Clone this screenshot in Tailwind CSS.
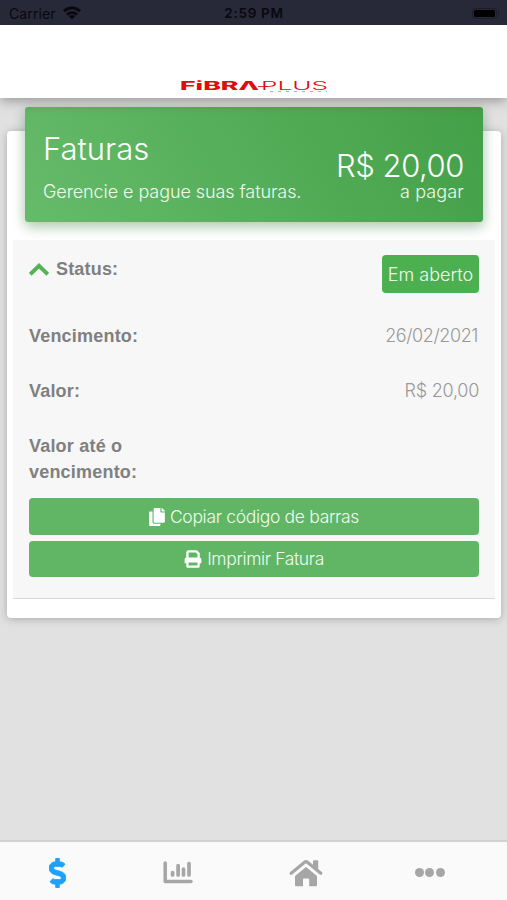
<!DOCTYPE html>
<html lang="pt-BR">
<head>
<meta charset="utf-8">
<title>Faturas</title>
<script src="https://cdn.jsdelivr.net/npm/@tailwindcss/browser@4"></script>
</head>
<body class="w-[507px] h-[900px] overflow-hidden bg-[#e1e1e1] flex flex-col font-['Inter','Liberation_Sans',sans-serif] font-light text-[17px]">
  <div class="h-[25px] shrink-0 bg-[#272838] text-[#08080e] grid grid-cols-3 items-center pl-[9px] pr-[8px] pt-[2px] text-[13px] relative z-20">
    <div class="flex items-center gap-[7px]">
      <span class="font-normal text-[14px] tracking-[0.1px]">Carrier</span>
      <svg class="w-[18px] h-[14px] -mt-[2px]" viewBox="0 0 18 14" fill="none" stroke="currentColor" stroke-width="2.8"><path d="M1 5.200a11.500 11.500 0 0 1 16 0M4 8.700a7.200 7.200 0 0 1 10 0"/><path d="M9 13.500 6 10.500a4.300 4.300 0 0 1 6 0z" fill="currentColor" stroke="none"/></svg>
    </div>
    <span class="text-center font-semibold text-[13.5px] tracking-[0.7px] whitespace-nowrap">2:59 PM</span>
    <div class="flex justify-end items-center gap-[1px] -mt-[1px]">
      <div class="w-[25px] h-[11px] rounded-[3px] border border-[#1d1d2a] p-px"><div class="h-full bg-black rounded-[1.5px]"></div></div>
      <div class="w-[1px] h-[4px] bg-[#1d1d2a]"></div>
    </div>
  </div>
  <header class="h-[73px] shrink-0 bg-white shadow-[0_2px_12px_rgba(0,0,0,0.38)] relative z-10 flex justify-center items-end pb-[4px]">
    <svg class="w-[150px] h-[16px]" viewBox="0 0 150 16">
      <g fill="#e20a10" font-family="Inter, sans-serif">
        <text x="1" y="11.500" font-size="11.500" font-weight="800" textLength="79" lengthAdjust="spacingAndGlyphs">FiBRΛ</text>
        <text x="82" y="11.500" font-size="11" font-weight="300" textLength="67" lengthAdjust="spacingAndGlyphs">PLUS</text>
      </g>
      <path d="M79 8.500h10" stroke="#e20a10" stroke-width=".8"/>
      <path d="M91 13.500h57" stroke="#e20a10" stroke-opacity=".45" stroke-width="1" stroke-dasharray="3 5"/>
    </svg>
  </header>
  <main class="flex-1 px-[7px] pr-[6px] pt-[33px]">
    <section class="h-[487px] bg-white rounded-[4px] shadow-[0_1px_9px_rgba(0,0,0,0.25)] px-[6px] flex flex-col">
      <div class="-mt-[24px] ml-[12px] mr-[12px] h-[115px] shrink-0 rounded-[3px] bg-linear-[60deg,#66bb6a,#43a047] shadow-[0_5px_14px_rgba(60,140,65,0.32),0_3px_12px_rgba(0,0,0,0.12)] text-white flex justify-between pl-[18px] pr-[19px] whitespace-nowrap relative">
        <div class="pt-[22px]">
          <h1 class="text-[31px] leading-[40px]">Faturas</h1>
          <p class="text-[18px] leading-[24px] pt-[11px] tracking-[-0.08px] text-[#effbef]">Gerencie e pague suas faturas.</p>
        </div>
        <div class="pt-[43px] text-right">
          <div class="text-[31px] leading-[31px] tracking-[-0.45px]">R$ 20,00</div>
          <div class="text-[18px] leading-[22px] text-[#effbef] tracking-[0.15px]">a pagar</div>
        </div>
      </div>
      <div class="mt-[18px] h-[359px] bg-[#f7f7f7] border-b border-[#d9d9d9] pl-[16px] pr-[16px] text-[#999]">
        <div class="flex justify-between pt-[15px] h-[83px]">
          <div class="flex items-start gap-[7px] font-['Liberation_Sans',sans-serif] font-bold text-[18px] tracking-[0.18px] leading-[28px] text-[#808080]">
            <svg class="w-[20px] h-[14px] mt-[7px]" viewBox="0 0 20 14" fill="none" stroke="#55b259" stroke-width="4" stroke-linejoin="miter"><path d="M1.200 12.300 10 3.800l8.800 8.500"/></svg>
            <span>Status:</span>
          </div>
          <span class="w-[97px] h-[38px] rounded-[4px] bg-[#4caf50] text-[#effbef] text-[18px] flex items-center justify-center whitespace-nowrap">Em aberto</span>
        </div>
        <div class="flex justify-between h-[55px] leading-[26px]">
          <span class="font-['Liberation_Sans',sans-serif] font-bold text-[18px] tracking-[0.2px] text-[#808080]">Vencimento:</span>
          <span class="text-[18px] tracking-[-0.4px] pr-[1px]">26/02/2021</span>
        </div>
        <div class="flex justify-between h-[55px] leading-[26px]">
          <span class="font-['Liberation_Sans',sans-serif] font-bold text-[18px] tracking-[0.2px] text-[#808080]">Valor:</span>
          <span class="text-[18px] tracking-[-0.25px]">R$ 20,00</span>
        </div>
        <div class="h-[65px] w-[130px] leading-[26px] font-['Liberation_Sans',sans-serif] font-bold text-[18px] tracking-[0.2px] text-[#808080]">Valor até o vencimento:</div>
        <div class="flex flex-col gap-[6px] text-[#effbef] text-[17.5px]">
          <div class="h-[37px] rounded-[4px] bg-[#60b664] flex items-center justify-center gap-[5px]">
            <svg class="w-[16px] h-[18px]" viewBox="0 0 448 512" fill="#fff"><path d="M320 448v40c0 13.255-10.745 24-24 24H24c-13.255 0-24-10.745-24-24V120c0-13.255 10.745-24 24-24h72v296c0 30.879 25.121 56 56 56h168zm0-344V0H152c-13.255 0-24 10.745-24 24v368c0 13.255 10.745 24 24 24h272c13.255 0 24-10.745 24-24V128H344c-13.200 0-24-10.800-24-24zm120.971-31.029L375.029 7.029A24 24 0 0 0 358.059 0H352v96h96v-6.059a24 24 0 0 0-7.029-16.970z"/></svg>
            <span class="tracking-[-0.32px] pt-[1px]">Copiar código de barras</span>
          </div>
          <div class="h-[36px] rounded-[4px] bg-[#60b664] flex items-center justify-center gap-[5px]">
            <svg class="w-[18px] h-[18px]" viewBox="0 0 18 18" fill="none" stroke="#fff" stroke-width="2.300" stroke-linejoin="round"><path d="M3.400 8V2.400a1 1 0 0 1 1-1h8l2.200 2.200V8"/><path d="M2.600 7.600h12.800a2 2 0 0 1 2 2V13.300H.6V9.600a2 2 0 0 1 2-2z" fill="#fff" stroke="none"/><path d="M3.400 11.400h11.200v5.200H3.400z" fill="#60b664"/></svg>
            <span class="tracking-[-0.38px] pt-[1px]">Imprimir Fatura</span>
          </div>
        </div>
      </div>
    </section>
  </main>
  <nav class="h-[60px] shrink-0 bg-[#fafafa] border-t-2 border-[#d2d2d2] flex items-center text-[#a6a6a6] pt-[3px]">
    <div class="w-[115px] flex justify-center"><svg class="w-[17px] h-[30px]" viewBox="0 0 288 512" fill="#1ea1f9" stroke="#1ea1f9" stroke-width="14"><path d="M209.200 233.400l-108-31.600C88.700 198.200 80 186.500 80 173.500c0-16.300 13.200-29.500 29.500-29.500h66.300c12.200 0 24.200 3.700 34.200 10.500 6.100 4.100 14.300 3.100 19.500-2l34.800-34c7.100-6.900 6.100-18.400-1.800-24.500C238 74.800 207.400 64.100 176 64V16c0-8.800-7.200-16-16-16h-32c-8.800 0-16 7.200-16 16v48h-2.500C45.800 64-5.400 118.700.5 183.600c4.200 46.100 39.400 83.600 83.800 96.600l102.500 30c12.500 3.700 21.200 15.300 21.200 28.300 0 16.300-13.200 29.500-29.500 29.500h-66.300C100 368 88 364.300 78 357.500c-6.100-4.100-14.300-3.100-19.500 2l-34.800 34c-7.100 6.900-6.100 18.400 1.800 24.500 24.500 19.200 55.100 29.900 86.500 30v48c0 8.800 7.200 16 16 16h32c8.800 0 16-7.200 16-16v-48.200c46.600-.9 90.300-28.600 105.700-72.700 21.500-61.600-14.600-124.800-72.500-141.700z"/></svg></div>
    <div class="w-[125px] flex justify-center"><svg class="w-[30px] h-[23px]" viewBox="0 0 30 23" fill="none" stroke="currentColor" stroke-linecap="round"><path d="M2.200 2v18.500h25.800" stroke-width="3.500" stroke-linejoin="round"/><path d="M9.600 11.500v2.500M15.100 4.500v9.500M20.500 8.200v5.800M26 2.500v11.500" stroke-width="3.700"/></svg></div>
    <div class="w-[132px] flex justify-center"><svg class="w-[34px] h-[28px]" viewBox="0 0 34 28" fill="currentColor"><path d="M17 8 28 17V26.300a1 1 0 0 1-1 1H20.200V20.500a1 1 0 0 0-1-1H15a1 1 0 0 0-1 1V27.300H7a1 1 0 0 1-1-1V17z"/><path d="M2.200 14.300 15.600 3.200a2.200 2.200 0 0 1 2.800 0L31.800 14.300" fill="none" stroke="currentColor" stroke-width="3.200" stroke-linecap="round"/><path d="M24 2.200a1 1 0 0 1 1-1h3.200a1 1 0 0 1 1 1V12L24 8z"/></svg></div>
    <div class="w-[115px] flex justify-center gap-[1.500px]"><i class="w-[9px] h-[9px] rounded-full bg-[#a6a6a6]"></i><i class="w-[9px] h-[9px] rounded-full bg-[#a6a6a6]"></i><i class="w-[9px] h-[9px] rounded-full bg-[#a6a6a6]"></i></div>
  </nav>
</body>
</html>
